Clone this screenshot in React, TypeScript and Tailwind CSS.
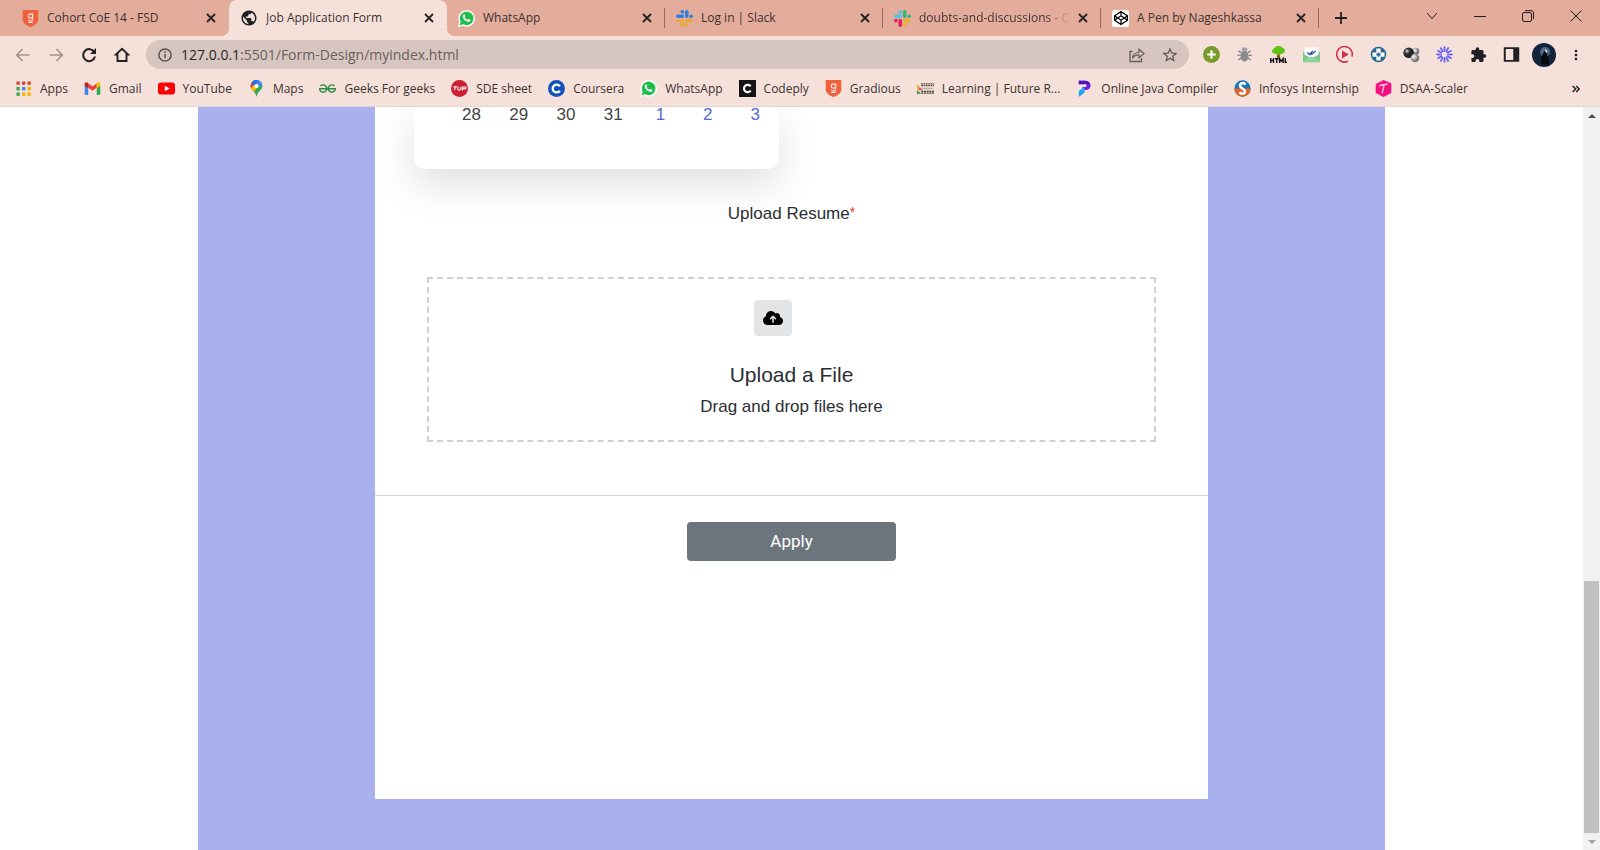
import type { ReactNode } from "react";
import { FaCloudArrowUp, FaCodepen } from "react-icons/fa6";
import { MdExtension, MdMoreVert, MdPublic, MdStarBorder } from "react-icons/md";
import { SiGeeksforgeeks } from "react-icons/si";

function Svg({ children, size = "size-[17px]", box = "0 0 24 24" }: { children: ReactNode; size?: string; box?: string }) {
  return (
    <svg viewBox={box} className={`${size} shrink-0`} fill="none" aria-hidden="true">
      {children}
    </svg>
  );
}

const Gradious = () => (
  <Svg>
    <path d="M1 0h22v13c0 5-5 9-11 11C6 22 1 18 1 13z" fill="#f1603c" />
    <circle cx="12" cy="8.500" r="3" stroke="#ffe3da" strokeWidth="1.600" />
    <path d="M15 4.500v8.500c0 3-5.500 3-6 .5M8.500 17.500h7" stroke="#ffe3da" strokeWidth="1.500" />
  </Svg>
);

const WhatsAppIcon = () => (
  <Svg>
    <path d="M0 24 1.800 17A11.600 11.600 0 1 1 7 22.200z" fill="#fff" />
    <path d="m2.300 21.700 1.500-5.200a9.600 9.600 0 1 1 3.700 3.700z" fill="#1fbd4c" />
    <path d="M9.500 6.700c-.5-1-1.300-.7-2 0-2.500 3 1.500 7.500 4 9 2 1.200 4.500 2 5.700 0 .6-1 .5-1.600 0-1.900l-2-1c-.7-.3-1.200.9-1.800 1.100-1 0-3.500-2-4-3.300 0-.6 1-1.100.9-1.700z" fill="#fff" />
  </Svg>
);

function SlackMark({ colors }: { colors: [string, string, string, string] }) {
  return (
    <Svg>
      {colors.map((color, i) => (
        <path
          key={i}
          fill={color}
          transform={`rotate(${i * 90} 12 12)`}
          d="M8.834 5.042a2.528 2.528 0 0 1-2.521-2.520A2.528 2.528 0 0 1 8.834 0a2.528 2.528 0 0 1 2.521 2.522v2.520H8.834zM8.834 6.313a2.528 2.528 0 0 1 2.521 2.521 2.528 2.528 0 0 1-2.521 2.521H2.522A2.528 2.528 0 0 1 0 8.834a2.528 2.528 0 0 1 2.522-2.521h6.312z"
        />
      ))}
    </Svg>
  );
}

const CodePen = () => (
  <span className="flex size-[17px] shrink-0 items-center justify-center rounded-xs bg-white text-black">
    <FaCodepen size={14} />
  </span>
);

const AppsGrid = () => (
  <Svg>
    {["#d9483b", "#d9483b", "#d9483b", "#3aa757", "#4285f4", "#f4b400", "#3aa757", "#f4b400", "#f4b400"].map((c, i) => (
      <rect key={i} x={2 + (i % 3) * 7.8} y={2 + Math.floor(i / 3) * 7.8} width="4.800" height="4.800" fill={c} />
    ))}
  </Svg>
);

const Gmail = () => (
  <Svg>
    <path d="M1 6v13.500c0 .8.700 1.500 1.500 1.500H6V9.500z" fill="#4285f4" />
    <path d="M18 9.500V21h3.500c.8 0 1.500-.7 1.500-1.500V6z" fill="#34a853" />
    <path d="M6 4.500v6.300l6 4.500 6-4.500V4.500L12 9z" fill="#ea4335" />
    <path d="M1 6v2l5 3.500V4.500L4.600 3.700C3 2.600 1 3.500 1 6z" fill="#c5221f" />
    <path d="M23 6v2l-5 3.500V4.500l1.400-.8C21 2.600 23 3.500 23 6z" fill="#fbbc04" />
  </Svg>
);

const YouTube = () => (
  <Svg>
    <rect x="0" y="3.500" width="24" height="17" rx="4" fill="#f00" />
    <path d="m9.500 8.200 7 3.800-7 3.800z" fill="#fff" />
  </Svg>
);

const Maps = () => (
  <Svg>
    <clipPath id="pin">
      <path d="M12 0a8.500 8.500 0 0 0-8.500 8.500C3.500 14 10 15 12 24c2-9 8.500-10 8.500-15.500A8.500 8.500 0 0 0 12 0z" />
    </clipPath>
    <g clipPath="url(#pin)">
      <rect width="24" height="24" fill="#34a853" />
      <path d="M0 0h10l3 6-9 9H0z" fill="#ea4335" />
      <path d="M7 0h17v5l-8 4z" fill="#4285f4" />
      <path d="m3 13 7-8 3 6-7 8z" fill="#fbbc04" />
      <path d="M9 0h6l-6 8-5-4z" fill="#1a73e8" />
    </g>
    <circle cx="12" cy="8.500" r="3" fill="#fff" />
  </Svg>
);

const Tuf = () => (
  <Svg>
    <circle cx="12" cy="12" r="12" fill="#cb1f32" />
    <path d="M3 9.500h6M6 9.500l-.8 5M10 9.500l-.5 3c0 2.500 3.500 2.500 4 0l.5-3M15.500 15l.8-5h4.500c1 1.500 0 2.500-1.500 2.500h-3" stroke="#fff" strokeWidth="1.500" />
  </Svg>
);

const Coursera = () => (
  <Svg>
    <circle cx="12" cy="12" r="12" fill="#1353b8" />
    <path d="M16.800 8.800a5.600 5.600 0 1 0 0 6.400" stroke="#fff" strokeWidth="3.200" />
  </Svg>
);

const Codeply = () => (
  <Svg>
    <rect width="24" height="24" fill="#151515" />
    <path d="M16.500 9a5.200 5.200 0 1 0 0 6" stroke="#fff" strokeWidth="3" />
  </Svg>
);

const FutureReady = () => (
  <Svg>
    <path d="M6 5.500h18M6 8h18" stroke="#57504c" strokeWidth="1.800" strokeDasharray="2.500 .8" />
    <path d="M7 12h16" stroke="#a8977f" strokeWidth="2.200" strokeDasharray="2 1" />
    <path d="M6 16h18M6 18.500h18" stroke="#4a4441" strokeWidth="1.800" strokeDasharray="3 .8" />
    <path d="m0 6 5 5-5 1z" fill="#e2ad27" />
    <path d="m0 13 5-2 3 4z" fill="#d8493b" />
    <path d="m0 14 6 5-6 1z" fill="#43a047" />
  </Svg>
);

const JavaCompiler = () => (
  <Svg>
    <path d="M4 1h9c10 0 10 13 1 13H9v-4h4c2.500 0 2.500-4 0-4H4z" fill="#6a1be0" />
    <path d="M4 1h9c4 0 6 2 6.500 4L4 6z" fill="#4a13b5" />
    <path d="m4 15 8-5v8l-8 6z" fill="#21a5f5" />
  </Svg>
);

const Infosys = () => (
  <Svg>
    <circle cx="12" cy="12" r="11.500" fill="#1978b5" />
    <path d="M.5 12h23a11.500 11.500 0 0 1-23 0z" fill="#e4622b" />
    <path d="M16 6.500C14 3 8.500 4 8.500 8c0 4 7 4 7 8 0 4-6 4.500-7.500 1" stroke="#fff" strokeWidth="3.600" />
  </Svg>
);

const Scaler = () => (
  <Svg>
    <path d="m12 0 11 4.500v14L12 24 1 18.500v-13z" fill="#f5107f" />
    <path d="M6 8.500c4-2 8-1.500 12-3M13 7l-3 12" stroke="#ffd3e6" strokeWidth="1.800" />
  </Svg>
);

const tabs = [
  { title: "Cohort CoE 14 - FSD", icon: <Gradious /> },
  { title: "Job Application Form", icon: <MdPublic size={18} className="shrink-0 text-[#202124]" />, active: true },
  { title: "WhatsApp", icon: <WhatsAppIcon /> },
  { title: "Log in | Slack", icon: <SlackMark colors={["#2f7de0", "#2f7de0", "#e8a838", "#e8a838"]} /> },
  { title: "doubts-and-discussions - C", icon: <SlackMark colors={["#4cc3e8", "#2eb67d", "#ecb22e", "#e01e5a"]} />, faded: true },
  { title: "A Pen by Nageshkassa", icon: <CodePen /> },
];

const bookmarks = [
  { title: "Apps", icon: <AppsGrid /> },
  { title: "Gmail", icon: <Gmail /> },
  { title: "YouTube", icon: <YouTube /> },
  { title: "Maps", icon: <Maps /> },
  { title: "Geeks For geeks", icon: <SiGeeksforgeeks size={17} className="shrink-0 text-[#2f8d46]" /> },
  { title: "SDE sheet", icon: <Tuf /> },
  { title: "Coursera", icon: <Coursera /> },
  { title: "WhatsApp", icon: <WhatsAppIcon /> },
  { title: "Codeply", icon: <Codeply /> },
  { title: "Gradious", icon: <Gradious /> },
  { title: "Learning | Future R...", icon: <FutureReady /> },
  { title: "Online Java Compiler", icon: <JavaCompiler /> },
  { title: "Infosys Internship", icon: <Infosys /> },
  { title: "DSAA-Scaler", icon: <Scaler /> },
];

const extensions: { name: string; icon: ReactNode }[] = [
  {
    name: "Add",
    icon: (
      <Svg>
        <circle cx="12" cy="12" r="12" fill="#769b2b" />
        <path d="M12 6v12M6 12h12" stroke="#fff" strokeWidth="3" />
      </Svg>
    ),
  },
  {
    name: "Bug",
    icon: (
      <Svg>
        <path d="M7 9 3 7M6.500 13H1.500M7 17l-4 3M17 9l4-2M17.500 13h5M17 17l4 3" stroke="#777" strokeWidth="1.600" />
        <ellipse cx="12" cy="14" rx="5.800" ry="8" fill="#8b8b8b" />
        <path d="M7.500 6.500C7.500 0 16.500 0 16.500 6.500z" fill="#a3a3a3" />
      </Svg>
    ),
  },
  {
    name: "Markup tree",
    icon: (
      <Svg>
        <path d="M10.500 9h3l1 8h-5z" fill="#93601f" />
        <path d="M3 8c-1-4 3-4 4-6 2-3 8-3 10 0 2 1 5 2 4 6-1 3-5 2-6 4h-6C8 10 4 11 3 8z" fill="#62c416" />
        <path d="M1 17v7M5 17v7M1 20.500h4M7 18h5M9.500 18v6M13.500 24v-6l2.500 3.500 2.500-3.500v6M21.500 17v6H24" stroke="#111" strokeWidth="2" />
      </Svg>
    ),
  },
  {
    name: "Mail tracker",
    icon: (
      <Svg>
        <path d="M0 8h24v13c0 1-.6 2-2 2H2c-1.400 0-2-1-2-2z" fill="#7cc78a" />
        <path d="M2 4c0-1 1-2 2-2h16c1 0 2 1 2 2v8l-7 4H9l-7-4z" fill="#fff" />
        <path d="m6 9 3 3 5-5M11 11l1 1 6-5" stroke="#3949ab" strokeWidth="1.800" />
        <path d="m0 22 9-7h6l9 7" fill="#92d59e" />
      </Svg>
    ),
  },
  {
    name: "Video player",
    icon: (
      <Svg>
        <path d="M17 21.500A11 11 0 1 1 22.500 15" stroke="#d0314c" strokeWidth="2.200" />
        <path d="M8.500 6.500 18 12l-9.500 5.500z" fill="#d0314c" />
      </Svg>
    ),
  },
  {
    name: "Controller",
    icon: (
      <Svg>
        <circle cx="12" cy="12" r="11" fill="#27688f" />
        <path d="M9 3.500h6V9h5.500v6H15v5.500H9V15H3.500V9H9z" fill="#fff" />
        <path d="M12 9v6M9 12h6" stroke="#27688f" strokeWidth="2.600" />
      </Svg>
    ),
  },
  {
    name: "Molecule",
    icon: (
      <Svg>
        <defs>
          <radialGradient id="dark" cx=".35" cy=".35"><stop stopColor="#ddd" /><stop offset=".5" stopColor="#333" /><stop offset="1" stopColor="#222" /></radialGradient>
          <radialGradient id="light" cx=".35" cy=".35"><stop stopColor="#fff" /><stop offset="1" stopColor="#777" /></radialGradient>
        </defs>
        <circle cx="18" cy="7.500" r="5" fill="url(#light)" />
        <circle cx="8" cy="9.500" r="7.500" fill="url(#dark)" />
        <circle cx="17" cy="17" r="6" fill="url(#light)" />
      </Svg>
    ),
  },
  {
    name: "Burst",
    icon: (
      <Svg>
        {Array.from({ length: 12 }, (_, i) => (
          <path key={i} d="M12 .5v7.500" stroke="#645df6" strokeWidth="2.400" transform={`rotate(${i * 30} 12 12)`} />
        ))}
      </Svg>
    ),
  },
  { name: "Extensions", icon: <MdExtension size={18} className="text-[#202124]" /> },
  {
    name: "Side panel",
    icon: (
      <Svg>
        <path d="M2.500 3h19v18h-19z" stroke="#202124" strokeWidth="2.800" />
        <path d="M14.500 3h7v18h-7z" fill="#202124" />
      </Svg>
    ),
  },
];

const CloseMark = () => (
  <Svg size="size-[10px]" box="0 0 10 10">
    <path d="m1 1 8 8M9 1 1 9" stroke="#222" strokeWidth="1.800" />
  </Svg>
);

function Tab({ title, icon, active, faded, divided }: { title: string; icon: ReactNode; active?: boolean; faded?: boolean; divided: boolean }) {
  return (
    <div className={`relative flex h-9 w-[218px] min-w-0 items-center pr-3 pl-[11px] ${active ? "rounded-t-lg bg-[#f5e1da]" : ""}`}>
      {active && (
        <>
          <span className="absolute bottom-0 -left-2 size-2 bg-[radial-gradient(circle_at_0_0,transparent_8px,#f5e1da_8px)]" />
          <span className="absolute -right-2 bottom-0 size-2 bg-[radial-gradient(circle_at_100%_0,transparent_8px,#f5e1da_8px)]" />
        </>
      )}
      <button className="flex min-w-0 flex-1 items-center gap-2 text-left">
        {icon}
        <span className={`overflow-hidden whitespace-nowrap ${faded ? "bg-linear-to-r from-[#3b3230] from-85% to-[#e4ac9b] bg-clip-text text-transparent" : ""}`}>{title}</span>
      </button>
      <button aria-label={`Close ${title}`} className="ml-2 flex size-3 items-center justify-center">
        <CloseMark />
      </button>
      {divided && <span className="absolute top-2 right-0 h-5 w-px bg-[#96695c]" />}
    </div>
  );
}

function BrowserHeader() {
  return (
    <header className="relative z-10 shrink-0 border-b border-[#e6d5d1] bg-[#f5e1da] font-['Open_Sans','Noto_Sans',sans-serif] text-xs text-[#3b3230]">
      <div className="flex h-9 items-center bg-[#e4ac9b] pl-[11px]">
        {tabs.map((tab, i) => (
          <Tab key={tab.title} {...tab} divided={i > 1} />
        ))}
        <button aria-label="New tab" className="ml-3 p-1">
          <Svg size="size-3" box="0 0 12 12">
            <path d="M6 0v12M0 6h12" stroke="#222" strokeWidth="1.800" />
          </Svg>
        </button>
        <div className="mb-1 ml-auto flex items-center gap-9 pr-[18px]">
          <button aria-label="Search tabs">
            <Svg size="size-3" box="0 0 12 12"><path d="m1 3 5 5.500L11 3" stroke="#222" /></Svg>
          </button>
          <button aria-label="Minimize">
            <Svg size="size-3" box="0 0 12 12"><path d="M0 6.500h12" stroke="#222" /></Svg>
          </button>
          <button aria-label="Restore">
            <Svg size="size-3" box="0 0 12 12">
              <rect x=".5" y="2.500" width="9" height="9" rx="1.500" stroke="#222" />
              <path d="M3 .6h6c1.500 0 2.500 1 2.500 2.500v6" stroke="#222" />
            </Svg>
          </button>
          <button aria-label="Close window">
            <Svg size="size-3" box="0 0 12 12"><path d="m.5.5 11 11M11.500.5l-11 11" stroke="#222" /></Svg>
          </button>
        </div>
      </div>

      <div className="flex h-[37px] items-center pl-[15px]">
        <div className="flex shrink-0 items-center gap-[17px] pr-4">
          <button aria-label="Back">
            <Svg size="size-4" box="0 0 16 16"><path d="M14.500 8H2M7.500 2 1.700 8l5.800 6" stroke="#a3928d" strokeWidth="1.600" /></Svg>
          </button>
          <button aria-label="Forward">
            <Svg size="size-4" box="0 0 16 16"><path d="M1.500 8H14M8.500 2l5.800 6-5.800 6" stroke="#a3928d" strokeWidth="1.600" /></Svg>
          </button>
          <button aria-label="Reload">
            <Svg size="size-4" box="0 0 16 16">
              <path d="M13.300 5A6 6 0 1 0 14 9.500" stroke="#202124" strokeWidth="2" />
              <path d="M15 1v6H9z" fill="#202124" />
            </Svg>
          </button>
          <button aria-label="Home">
            <Svg size="size-4" box="0 0 16 16"><path d="M3.500 14V7.500H1.800L8 1.700l6.200 5.800h-1.700V14z" stroke="#202124" strokeWidth="1.900" /></Svg>
          </button>
        </div>
        <div className="flex h-[29px] flex-1 items-center rounded-full bg-[#d7c6c0] pr-2.5 pl-3">
          <Svg size="size-[14px]" box="0 0 14 14">
            <circle cx="7" cy="7" r="6.100" stroke="#5c5250" strokeWidth="1.500" />
            <path d="M7 6v4.300M7 3.600v1.500" stroke="#5c5250" strokeWidth="1.500" />
          </Svg>
          <a href="#top" className="ml-[9px] flex-1 text-sm text-[#6a5f5c]">
            <span className="text-[#2b2523]">127.0.0.1</span>:5501/Form-Design/myindex.html
          </a>
          <button aria-label="Share">
            <Svg size="size-4" box="0 0 16 16">
              <path d="M3.500 4.500H1v10h11.500V11" stroke="#665b58" strokeWidth="1.300" />
              <path d="M3.500 11.500c.3-4 2.500-6 6.500-6V2.200l5 4.300-5 4.300V7.900c-3 0-5 .9-6.500 3.600z" stroke="#665b58" strokeWidth="1.200" />
            </Svg>
          </button>
          <button aria-label="Bookmark this page" className="ml-4 text-[#5c5250]">
            <MdStarBorder size={18} />
          </button>
        </div>
        <div className="flex shrink-0 items-center gap-4 pr-4 pl-[14px]">
          <div className="flex w-[317px] items-center justify-between">
            {extensions.map((ext) => (
              <button key={ext.name} aria-label={ext.name} className="flex w-[17px] justify-center">
                {ext.icon}
              </button>
            ))}
          </div>
          <button aria-label="Profile" className="-mx-1">
            <Svg size="size-6">
              <circle cx="12" cy="12" r="12" fill="#13233a" />
              <circle cx="13" cy="9" r="5" fill="#4d6685" />
              <path d="M9 21c0-6 1-9 2.500-11 .5-3 3.500-3 3.500 0l.5 3c1.500 2 1.500 5 1.500 9z" fill="#05080d" />
              <path d="m13 6 2 1.500V10l-1.500-1z" fill="#e9eef5" />
            </Svg>
          </button>
          <button aria-label="Menu" className="flex w-4 justify-center text-[#202124]">
            <MdMoreVert size={20} />
          </button>
        </div>
      </div>

      <nav className="flex h-[33px] items-center gap-4 pr-5 pb-0.5 pl-[15px]">
        {bookmarks.map((b) => (
          <a key={b.title} href="#top" className="flex shrink-0 items-center gap-2 whitespace-nowrap">
            {b.icon}
            {b.title}
          </a>
        ))}
        <button aria-label="More bookmarks" className="ml-auto">
          <Svg size="size-2" box="0 0 8 8"><path d="m.7 1 3 3-3 3M4.200 1l3 3-3 3" stroke="#222" strokeWidth="1.500" /></Svg>
        </button>
      </nav>
    </header>
  );
}

function Calendar() {
  return (
    <div className="ml-[39px] h-[62px] w-[365px] rounded-b-[10px] bg-white pl-[34px] shadow-[0_15px_40px_rgba(0,0,0,0.13)]">
      <table className="w-full table-fixed text-center leading-4">
        <tbody>
          <tr>
            {[28, 29, 30, 31].map((d) => (
              <td key={d} className="text-[#444]">{d}</td>
            ))}
            {[1, 2, 3].map((d) => (
              <td key={d} className="text-[#5568d8]">{d}</td>
            ))}
          </tr>
        </tbody>
      </table>
    </div>
  );
}

function Scrollbar() {
  return (
    <div className="flex w-[17px] shrink-0 flex-col items-center bg-[#f1f1f1]">
      <div className="flex h-[17px] items-center">
        <Svg size="h-1 w-2" box="0 0 8 4"><path d="M0 4h8L4 0z" fill="#505050" /></Svg>
      </div>
      <div className="flex w-[15px] flex-1 flex-col justify-end">
        <div className="h-[35.500%] bg-[#c1c1c1]" />
      </div>
      <div className="flex h-[17px] items-center">
        <Svg size="h-1 w-2" box="0 0 8 4"><path d="M0 0h8L4 4z" fill="#a3a3a3" /></Svg>
      </div>
    </div>
  );
}

export default function App() {
  return (
    <div id="top" className="flex h-screen flex-col overflow-hidden bg-white">
      <BrowserHeader />
      <div className="flex min-h-0 flex-1 font-['Liberation_Sans',Arial,sans-serif] text-[17px] text-[#2a2e32]">
        <main className="flex min-w-0 flex-1 justify-center">
          <div className="flex w-3/4 items-start justify-center bg-[#a8b0ed]">
            <form className="w-[70.200%] bg-white pb-[238px]" onSubmit={(e) => e.preventDefault()}>
              <Calendar />
              <label htmlFor="resume" className="mt-[33px] block text-center leading-6">
                Upload Resume<span className="align-top text-sm leading-5 text-[#ee3030]">*</span>
              </label>
              <section className="mx-[52px] mt-[51px] border-2 border-dashed border-[#d0d0d0] py-[21px] text-center">
                <div className="flex justify-center pr-[38px]">
                  <button id="resume" type="button" aria-label="Upload" className="flex h-9 w-[38px] items-center justify-center rounded bg-[#e3e4e6] text-black">
                    <FaCloudArrowUp size={20} />
                  </button>
                </div>
                <h2 className="mt-[27px] text-[21px] leading-6">Upload a File</h2>
                <p className="mt-2 leading-6">Drag and drop files here</p>
              </section>
              <hr className="mt-[53px] border-[#d3d8da]" />
              <button type="submit" className="mx-auto mt-[26px] block h-[39px] w-1/4 rounded bg-[#6c757d] font-[Roboto,sans-serif] text-white">
                Apply
              </button>
            </form>
          </div>
        </main>
        <Scrollbar />
      </div>
    </div>
  );
}
